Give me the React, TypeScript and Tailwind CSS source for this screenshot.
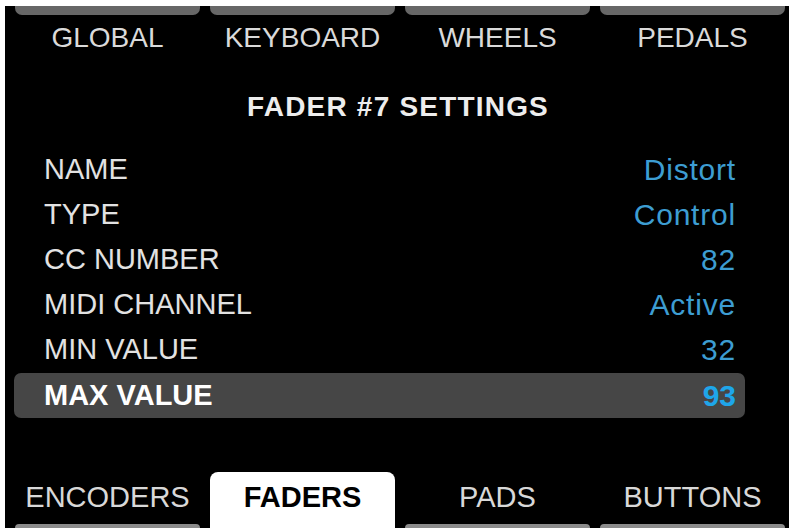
import React from 'react';

// Fader settings screen of a MIDI controller display
const topTabs = ['GLOBAL', 'KEYBOARD', 'WHEELS', 'PEDALS'];
const bottomTabs = ['ENCODERS', 'FADERS', 'PADS', 'BUTTONS'];

const rows = [
    { label: 'NAME', value: 'Distort' },
    { label: 'TYPE', value: 'Control' },
    { label: 'CC NUMBER', value: '82' },
    { label: 'MIDI CHANNEL', value: 'Active' },
    { label: 'MIN VALUE', value: '32' },
    { label: 'MAX VALUE', value: '93', selected: true },
];

const App = () => {
    return (
        <div className="w-[793px] h-[532px] bg-white pt-[6px] pl-[5px] overflow-hidden" style={{ fontFamily: '"Liberation Sans", Arial, sans-serif' }}>
            <div className="w-[784px] h-[522px] bg-black flex flex-col">

                {/* Top Tabs */}
                <div className="grid grid-cols-4 gap-[10px] pl-[10px] pr-[4px] w-[784px]">
                    {topTabs.map((tab) => (
                        <div key={tab} className="flex flex-col items-center">
                            <div className="w-full h-[9px] bg-[#676767] rounded-b-[7px]" />
                            <span className="mt-[7px] h-[32px] leading-[32px] text-[28px] text-[#dadada]">{tab}</span>
                        </div>
                    ))}
                </div>

                {/* Title */}
                <h1 className="mt-[36px] h-[34px] leading-[34px] text-center text-[28px] font-bold text-[#ededed] tracking-[1.2px] pl-[2px]">
                    FADER #7 SETTINGS
                </h1>

                {/* Settings Rows */}
                <div className="mt-[23px] ml-[9px] w-[731px] flex flex-col">
                    {rows.map((row) => (
                        <div
                            key={row.label}
                            className={`h-[45px] flex items-center justify-between pl-[30px] pr-[9px] ${row.selected ? 'bg-[#464646] rounded-[7px] h-[43px] mt-[1px]' : ''}`}
                        >
                            <span className={`text-[29px] ${row.selected ? 'font-bold text-white' : 'text-[#e2e2e2]'}`}>{row.label}</span>
                            <span className={`text-[30px] ${row.selected ? 'font-bold text-[#1ea6ea]' : 'text-[#3d9dd2] tracking-[0.8px]'}`}>{row.value}</span>
                        </div>
                    ))}
                </div>

                {/* Bottom Tabs */}
                <div className="mt-auto grid grid-cols-4 gap-[10px] pl-[10px] pr-[4px] w-[784px] h-[56px]">
                    {bottomTabs.map((tab) => (
                        tab === 'FADERS' ? (
                            <div key={tab} className="bg-white rounded-t-[8px] flex justify-center pt-[8px]">
                                <span className="h-[34px] leading-[34px] text-[29px] font-bold text-black">{tab}</span>
                            </div>
                        ) : (
                            <div key={tab} className="flex flex-col items-center pt-[8px]">
                                <span className="h-[34px] leading-[34px] text-[29px] text-[#d8d8d8]">{tab}</span>
                                <div className="mt-auto w-full h-[4px] bg-[#8c8c8c] rounded-t-[5px]" />
                            </div>
                        )
                    ))}
                </div>

            </div>
        </div>
    );
};

export default App;
